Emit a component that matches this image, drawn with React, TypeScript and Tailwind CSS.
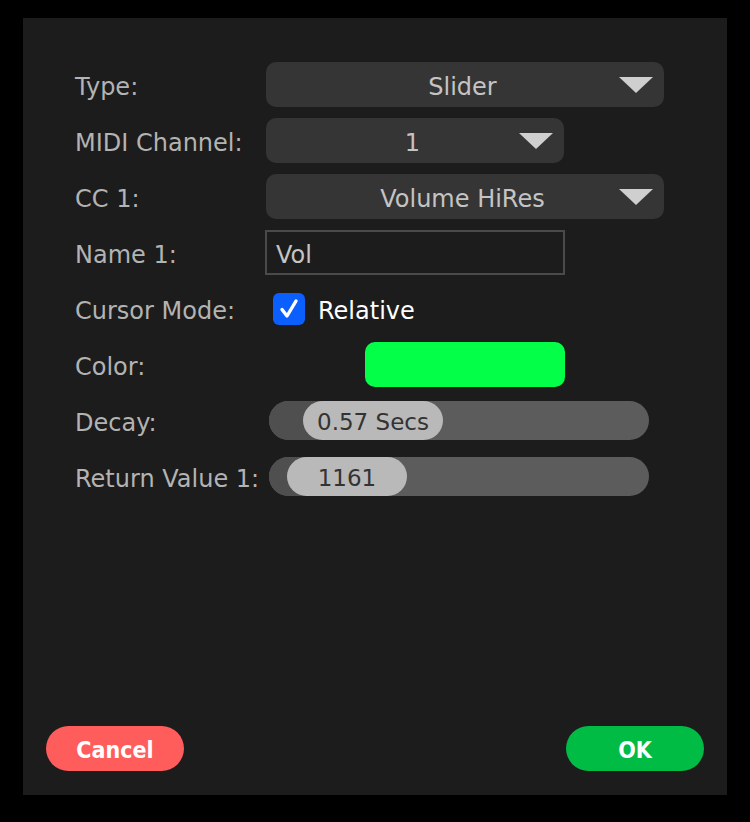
import React from "react";

const Caret = () => (
  <svg width="34" height="16" viewBox="0 0 34 16" className="shrink-0">
    <polygon points="0,0 34,0 17,16" fill="#cfcfcf" />
  </svg>
);

const Dropdown = ({ value, width }: { value: string; width: string }) => (
  <div className={`${width} h-[45px] rounded-[10px] bg-[#353535] flex items-center pl-[40px] pr-[11px]`}>
    <span className="flex-1 text-center text-[#c4c4c4] pt-[4px]">{value}</span>
    <Caret />
  </div>
);

const Row = ({ label, children }: { label: string; children: React.ReactNode }) => (
  <div className="flex items-center h-[45px]">
    <div className="w-[191px] shrink-0 text-[#b3b3b3] pt-[4px]">{label}</div>
    {children}
  </div>
);

const Slider = ({ value, left, width }: { value: string; left: number; width: number }) => (
  <div className="relative ml-[3px] w-[380px] h-[39px] rounded-full bg-[#5c5c5c] overflow-hidden">
    <div className="absolute left-0 top-0 h-full bg-[#4f4f4f]" style={{ width: left + width / 2 }} />
    <div
      className="absolute top-0 h-full rounded-full bg-[#b9b9b9] flex items-center justify-center text-[#333333] text-[23px] pt-[3px]"
      style={{ left, width }}
    >
      {value}
    </div>
  </div>
);

export default function App() {
  return (
    <div
      className="w-[750px] h-[822px] bg-black pt-[18px] pl-[23px]"
      style={{ fontFamily: '"DejaVu Sans", "Noto Sans", sans-serif' }}
    >
      <div className="w-[704px] h-[777px] bg-[#1c1c1c] flex flex-col text-[24px] leading-none">
        <div className="flex flex-col gap-[11px] pt-[44px] pl-[52px]">
          <Row label="Type:">
            <Dropdown value="Slider" width="w-[398px]" />
          </Row>
          <Row label="MIDI Channel:">
            <Dropdown value="1" width="w-[298px]" />
          </Row>
          <Row label="CC 1:">
            <Dropdown value="Volume HiRes" width="w-[398px]" />
          </Row>
          <Row label="Name 1:">
            <div className="-ml-[1px] w-[300px] h-[45px] border-2 border-[#4a4a4a] flex items-center pl-[9px] pt-[4px] text-[#c4c4c4]">
              Vol
            </div>
          </Row>
          <Row label="Cursor Mode:">
            <div className="ml-[7px] w-[32px] h-[32px] rounded-[6px] bg-[#0b5fff] flex items-center justify-center">
              <svg width="22" height="22" viewBox="0 0 22 22">
                <path d="M4 11.5 L9 18 L18 3" fill="none" stroke="white" strokeWidth="3.4" strokeLinecap="round" strokeLinejoin="round" />
              </svg>
            </div>
            <span className="ml-[13px] text-white pt-[4px]">Relative</span>
          </Row>
          <Row label="Color:">
            <div className="ml-[99px] w-[200px] h-[45px] rounded-[10px] bg-[#03ff47]" />
          </Row>
          <Row label="Decay:">
            <Slider value="0.57 Secs" left={34} width={140} />
          </Row>
          <Row label="Return Value 1:">
            <Slider value="1161" left={18} width={120} />
          </Row>
        </div>
        <div
          className="mt-auto mb-[24px] px-[23px] flex justify-between text-[23px]"
          style={{ fontFamily: '"DejaVu Sans Condensed", "DejaVu Sans", sans-serif' }}
        >
          <button className="w-[138px] h-[45px] rounded-full bg-[#ff5c5c] text-white font-bold pt-[4px]">Cancel</button>
          <button className="w-[138px] h-[45px] rounded-full bg-[#00bb44] text-white font-bold pt-[4px]">OK</button>
        </div>
      </div>
    </div>
  );
}
